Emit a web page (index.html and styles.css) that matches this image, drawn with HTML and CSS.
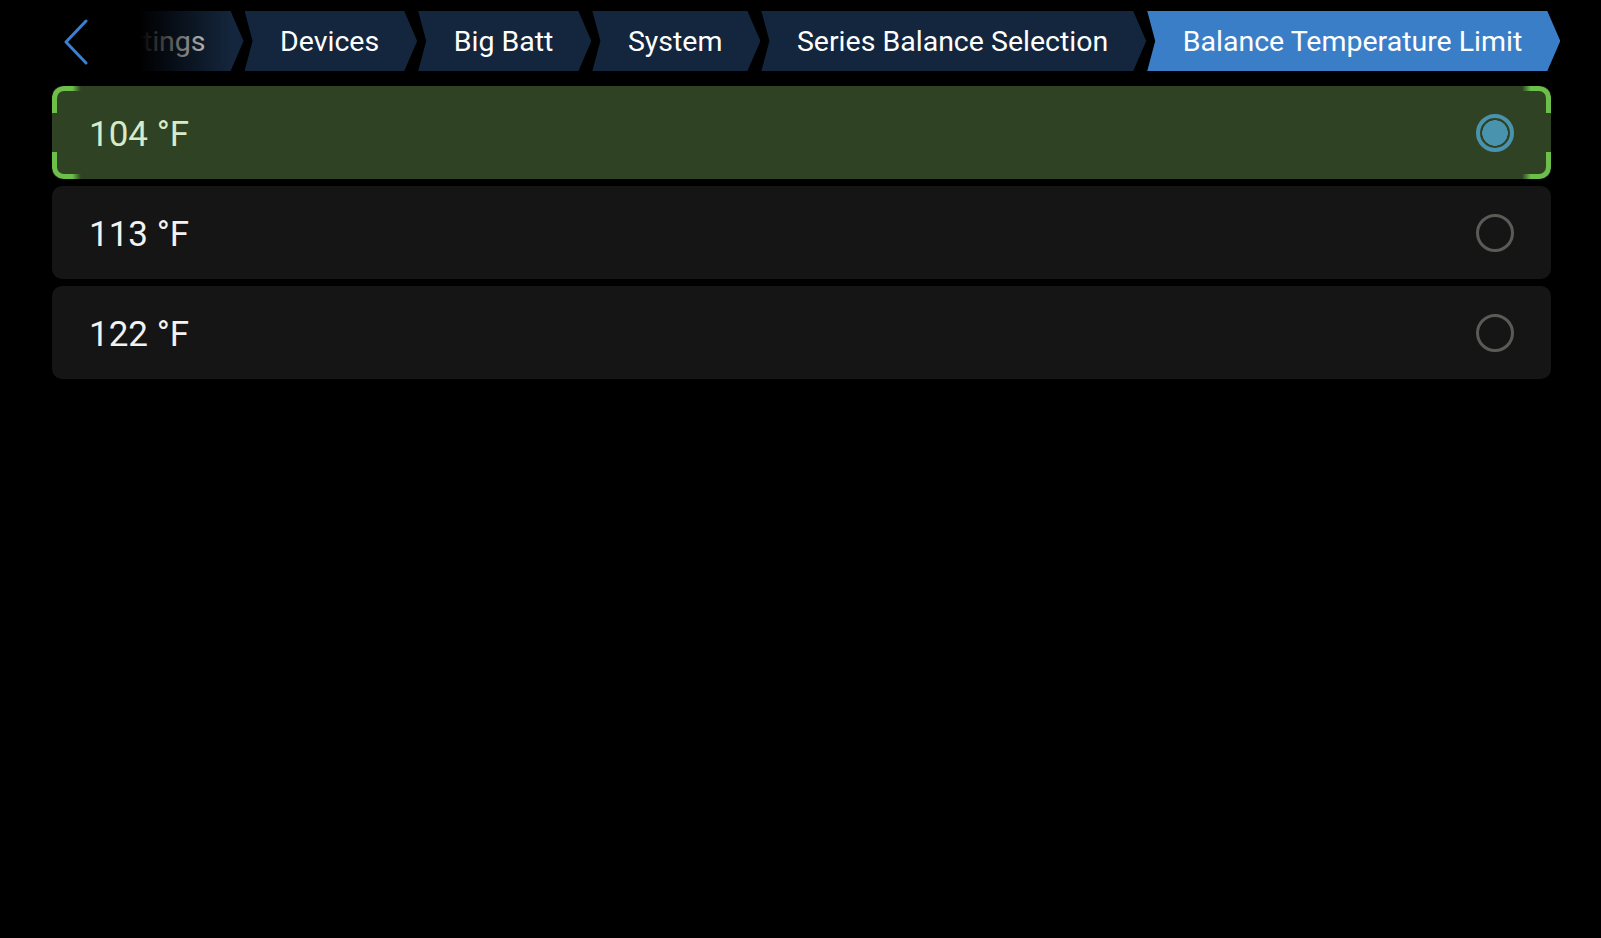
FILE: index.html
```html
<!DOCTYPE html>
<html lang="en">
<head>
  <meta charset="UTF-8" />
  <meta name="viewport" content="width=device-width, initial-scale=1.0" />
  <title>Balance Temperature Limit</title>
  <link rel="stylesheet" href="styles.css">
</head>
<body>
  <div class="header">
    <div class="crumbs">
      <div class="crumb">Settings</div>
      <div class="crumb">Devices</div>
      <div class="crumb">Big Batt</div>
      <div class="crumb">System</div>
      <div class="crumb">Series Balance Selection</div>
      <div class="crumb active">Balance Temperature Limit</div>
    </div>
    <div class="fade"></div>
    <button class="back-btn" aria-label="Back">
      <svg width="26" height="46" viewBox="0 0 26 46">
        <polyline points="23,2 3,23 23,44" fill="none" stroke="#3b80d0" stroke-width="3" stroke-linecap="round" stroke-linejoin="round" />
      </svg>
    </button>
  </div>

  <div class="options">
    <div class="option selected">
      <span class="label">104 °F</span>
      <span class="radio"></span>
      <span class="corner tl"></span>
      <span class="corner tr"></span>
      <span class="corner bl"></span>
      <span class="corner br"></span>
    </div>
    <div class="option">
      <span class="label">113 °F</span>
      <span class="radio"></span>
    </div>
    <div class="option">
      <span class="label">122 °F</span>
      <span class="radio"></span>
    </div>
  </div>
</body>
</html>
```

FILE: styles.css
```css
body {
  margin: 0;
  background-color: #000;
  color: #fff;
  font-family: Roboto, 'Noto Sans', sans-serif;
}

.header {
  position: relative;
  height: 60px;
  padding-top: 11px;
  overflow: hidden;
}

.crumbs {
  display: flex;
  gap: 1px;
  padding-left: 66px;
  white-space: nowrap;
}

.crumb {
  height: 60px;
  line-height: 62px;
  padding: 0 38px 0 35.5px;
  font-size: 28.5px;
  background-color: #14263d;
  color: #fff;
  clip-path: polygon(0 0, calc(100% - 13px) 0, 100% 50%, calc(100% - 13px) 100%, 0 100%, 8px 50%);
}

.crumb.active {
  background-color: #3a7ec8;
}

.fade {
  position: absolute;
  top: 0;
  left: 0;
  width: 232px;
  height: 100%;
  background: linear-gradient(to right, #000 0, #000 140px, rgba(0, 0, 0, 0) 232px);
}

.back-btn {
  position: absolute;
  top: 19px;
  left: 63px;
  padding: 0;
  background: none;
  border: none;
  cursor: pointer;
}

.back-btn svg {
  display: block;
}

.options {
  display: flex;
  flex-direction: column;
  gap: 7px;
  margin: 15px 50px 0 52px;
}

.option {
  position: relative;
  display: flex;
  align-items: center;
  justify-content: space-between;
  height: 93px;
  padding: 0 37px 0 37px;
  background-color: #151515;
  border-radius: 10px;
}

.option.selected {
  background-color: #304224;
}

.label {
  margin-top: 3px;
  font-size: 35px;
  color: #f2f2f2;
}

.option.selected .label {
  color: #d6ebca;
}

.radio {
  box-sizing: border-box;
  width: 38px;
  height: 38px;
  border: 3px solid #5a5a56;
  border-radius: 50%;
}

.option.selected .radio {
  border: 4px solid #4a93ae;
  background: radial-gradient(circle, #4a93ae 0, #4a93ae 12.5px, transparent 13px);
}

.corner {
  position: absolute;
  width: 24px;
  height: 22px;
  border-color: #6cc04a;
  border-style: solid;
  border-width: 0;
}

.corner.tl {
  top: 0;
  left: 0;
  border-top-width: 5px;
  border-left-width: 5px;
  border-top-left-radius: 12px;
  -webkit-mask-image: linear-gradient(to right, #000 70%, transparent);
  mask-image: linear-gradient(to right, #000 70%, transparent);
}

.corner.tr {
  top: 0;
  right: 0;
  border-top-width: 5px;
  border-right-width: 5px;
  border-top-right-radius: 12px;
  -webkit-mask-image: linear-gradient(to left, #000 70%, transparent);
  mask-image: linear-gradient(to left, #000 70%, transparent);
}

.corner.bl {
  bottom: 0;
  left: 0;
  border-bottom-width: 5px;
  border-left-width: 5px;
  border-bottom-left-radius: 12px;
  -webkit-mask-image: linear-gradient(to right, #000 70%, transparent);
  mask-image: linear-gradient(to right, #000 70%, transparent);
}

.corner.br {
  bottom: 0;
  right: 0;
  border-bottom-width: 5px;
  border-right-width: 5px;
  border-bottom-right-radius: 12px;
  -webkit-mask-image: linear-gradient(to left, #000 70%, transparent);
  mask-image: linear-gradient(to left, #000 70%, transparent);
}
```
